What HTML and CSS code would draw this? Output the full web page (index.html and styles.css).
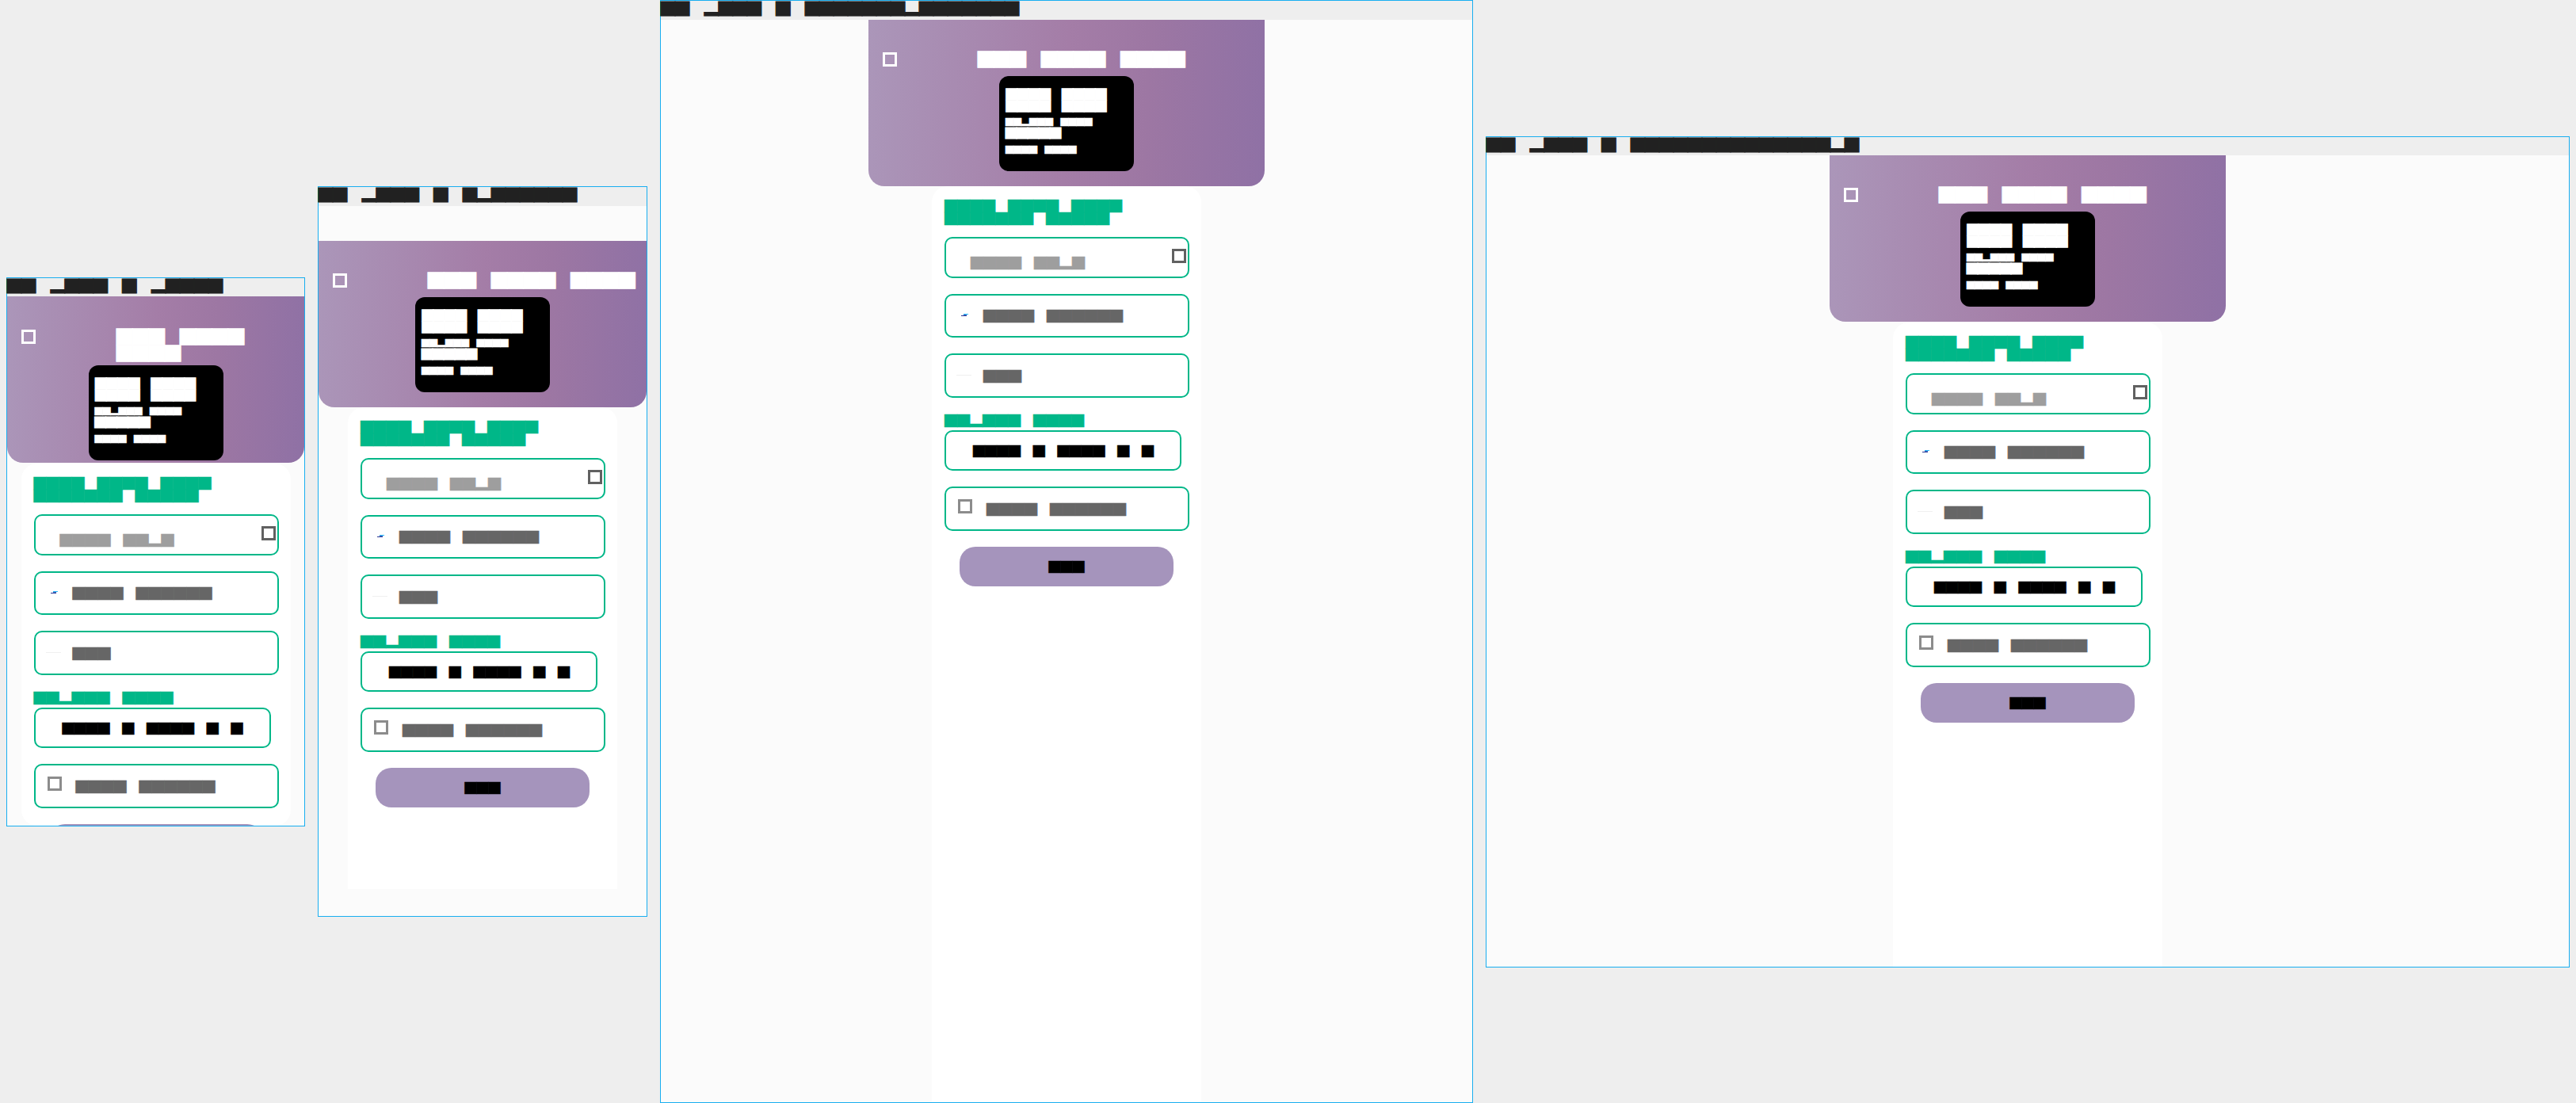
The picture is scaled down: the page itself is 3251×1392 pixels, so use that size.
FILE: index.html
```html
<!DOCTYPE html>
<html lang="en">
<head>
    <meta charset="UTF-8">
    <title>Responsive preview</title>
    <link rel="stylesheet" href="styles.css">
</head>
<body>
    <div class="stage">

        <!-- 375 -->
        <div class="frame frame-xs">
            <div class="frame-bar">██ ▂███ █ ▂████</div>
            <div class="frame-body">
                <div class="hero">
                    <div class="hero-nav">
                        <span class="box-icon hero-icon"></span>
                        <div class="hero-title">███ ████ ████</div>
                    </div>
                    <div class="ticket">
                        <div class="ticket-big">████ ████ ████ ████</div>
                        <div class="ticket-small">██▂███ ████</div>
                        <div class="ticket-mid">█████</div>
                        <div class="ticket-small ticket-last">████ ████</div>
                    </div>
                </div>
                <div class="form-card">
                    <div class="form-title">████ ████ ████ ███████ █████</div>
                    <div class="field field-first">
                        <span class="placeholder">████ ██▂█</span>
                        <span class="box-icon field-corner"></span>
                    </div>
                    <div class="field">
                        <svg class="flag-icon" width="9" height="4" viewBox="0 0 9 4"><rect x="3" width="6" height="1" fill="#29b6f6"/><rect y="2" width="7" height="1" fill="#283593"/><rect x="3" y="1" width="4" height="1" fill="#3f6fc4"/></svg>
                        <span class="field-text">████ ██████</span>
                    </div>
                    <div class="field">
                        <span class="rule-icon"></span>
                        <span class="field-text">███</span>
                    </div>
                    <div class="form-label">██▂███ ████</div>
                    <div class="field field-date">
                        <span class="date-text">████ █ ████ █ █</span>
                    </div>
                    <div class="field field-check">
                        <span class="box-icon check-icon"></span>
                        <span class="field-text">████ ██████</span>
                    </div>
                    <button class="submit-btn">███</button>
                </div>
            </div>
        </div>

        <!-- 414 -->
        <div class="frame frame-sm">
            <div class="frame-bar">██ ▂███ █ █▂██████</div>
            <div class="frame-body">
                <div class="hero">
                    <div class="hero-nav">
                        <span class="box-icon hero-icon"></span>
                        <div class="hero-title">███ ████ ████</div>
                    </div>
                    <div class="ticket">
                        <div class="ticket-big">████ ████ ████ ████</div>
                        <div class="ticket-small">██▂███ ████</div>
                        <div class="ticket-mid">█████</div>
                        <div class="ticket-small ticket-last">████ ████</div>
                    </div>
                </div>
                <div class="form-card">
                    <div class="form-title">████ ████ ████ ███████ █████</div>
                    <div class="field field-first">
                        <span class="placeholder">████ ██▂█</span>
                        <span class="box-icon field-corner"></span>
                    </div>
                    <div class="field">
                        <svg class="flag-icon" width="9" height="4" viewBox="0 0 9 4"><rect x="3" width="6" height="1" fill="#29b6f6"/><rect y="2" width="7" height="1" fill="#283593"/><rect x="3" y="1" width="4" height="1" fill="#3f6fc4"/></svg>
                        <span class="field-text">████ ██████</span>
                    </div>
                    <div class="field">
                        <span class="rule-icon"></span>
                        <span class="field-text">███</span>
                    </div>
                    <div class="form-label">██▂███ ████</div>
                    <div class="field field-date">
                        <span class="date-text">████ █ ████ █ █</span>
                    </div>
                    <div class="field field-check">
                        <span class="box-icon check-icon"></span>
                        <span class="field-text">████ ██████</span>
                    </div>
                    <button class="submit-btn">███</button>
                </div>
            </div>
        </div>

        <!-- 1024 -->
        <div class="frame frame-md">
            <div class="frame-bar">██ ▂███ █ ███████▂███████</div>
            <div class="frame-body">
                <div class="hero">
                    <div class="hero-nav">
                        <span class="box-icon hero-icon"></span>
                        <div class="hero-title">███ ████ ████</div>
                    </div>
                    <div class="ticket">
                        <div class="ticket-big">████ ████ ████ ████</div>
                        <div class="ticket-small">██▂███ ████</div>
                        <div class="ticket-mid">█████</div>
                        <div class="ticket-small ticket-last">████ ████</div>
                    </div>
                </div>
                <div class="form-card">
                    <div class="form-title">████ ████ ████ ███████ █████</div>
                    <div class="field field-first">
                        <span class="placeholder">████ ██▂█</span>
                        <span class="box-icon field-corner"></span>
                    </div>
                    <div class="field">
                        <svg class="flag-icon" width="9" height="4" viewBox="0 0 9 4"><rect x="3" width="6" height="1" fill="#29b6f6"/><rect y="2" width="7" height="1" fill="#283593"/><rect x="3" y="1" width="4" height="1" fill="#3f6fc4"/></svg>
                        <span class="field-text">████ ██████</span>
                    </div>
                    <div class="field">
                        <span class="rule-icon"></span>
                        <span class="field-text">███</span>
                    </div>
                    <div class="form-label">██▂███ ████</div>
                    <div class="field field-date">
                        <span class="date-text">████ █ ████ █ █</span>
                    </div>
                    <div class="field field-check">
                        <span class="box-icon check-icon"></span>
                        <span class="field-text">████ ██████</span>
                    </div>
                    <button class="submit-btn">███</button>
                </div>
            </div>
        </div>

        <!-- 1366 -->
        <div class="frame frame-lg">
            <div class="frame-bar">██ ▂███ █ ██████████████▂█</div>
            <div class="frame-body">
                <div class="hero">
                    <div class="hero-nav">
                        <span class="box-icon hero-icon"></span>
                        <div class="hero-title">███ ████ ████</div>
                    </div>
                    <div class="ticket">
                        <div class="ticket-big">████ ████ ████ ████</div>
                        <div class="ticket-small">██▂███ ████</div>
                        <div class="ticket-mid">█████</div>
                        <div class="ticket-small ticket-last">████ ████</div>
                    </div>
                </div>
                <div class="form-card">
                    <div class="form-title">████ ████ ████ ███████ █████</div>
                    <div class="field field-first">
                        <span class="placeholder">████ ██▂█</span>
                        <span class="box-icon field-corner"></span>
                    </div>
                    <div class="field">
                        <svg class="flag-icon" width="9" height="4" viewBox="0 0 9 4"><rect x="3" width="6" height="1" fill="#29b6f6"/><rect y="2" width="7" height="1" fill="#283593"/><rect x="3" y="1" width="4" height="1" fill="#3f6fc4"/></svg>
                        <span class="field-text">████ ██████</span>
                    </div>
                    <div class="field">
                        <span class="rule-icon"></span>
                        <span class="field-text">███</span>
                    </div>
                    <div class="form-label">██▂███ ████</div>
                    <div class="field field-date">
                        <span class="date-text">████ █ ████ █ █</span>
                    </div>
                    <div class="field field-check">
                        <span class="box-icon check-icon"></span>
                        <span class="field-text">████ ██████</span>
                    </div>
                    <button class="submit-btn">███</button>
                </div>
            </div>
        </div>

    </div>
</body>
</html>
```
FILE: styles.css
```css
* { box-sizing: border-box; margin: 0; padding: 0; }
html, body {
    height: 100%;
    overflow: hidden;
}
body {
    background-color: #eeeeee;
    font-family: "Noto Sans CJK SC", "Noto Sans", sans-serif;
    line-height: 1;
    word-spacing: .776em;
    -webkit-text-stroke: .6px;
}
.stage {
    display: flex;
    align-items: flex-start;
    gap: 16px;
    padding-left: 8px;
}

/* device frames */
.frame {
    flex: none;
    display: flex;
    flex-direction: column;
    border: 1px solid #18aef0;
}
.frame-xs { width: 377px; height: 693px; margin-top: 350px; }
.frame-sm { width: 416px; height: 922px; margin-top: 235px; }
.frame-md { width: 1026px; height: 1392px; }
.frame-lg { width: 1368px; height: 1049px; margin-top: 172px; }

.frame-bar {
    flex: none;
    height: 24px;
    background-color: #eeeeee;
    color: #212121;
    font-size: 18px;
    white-space: nowrap;
    word-spacing: 14.6px;
    -webkit-text-stroke: 1.2px;
}
.frame-xs .frame-bar, .frame-lg .frame-bar { height: 23px; }
.frame-body {
    flex: 1;
    min-height: 0;
    background-color: #fbfbfb;
    display: flex;
    flex-direction: column;
    align-items: center;
}
.frame-sm .frame-body { padding-top: 44px; padding-bottom: 34px; }

/* hero */
.hero {
    flex: none;
    width: 100%;
    max-width: 500px;
    height: 210px;
    padding-top: 39px;
    display: flex;
    flex-direction: column;
    background: linear-gradient(92deg, #ab96b9 0%, #a47da7 50%, #9d77a3 70%, #8f71a5 100%);
    border-radius: 0 0 20px 20px;
}
.frame-xs .hero { padding-top: 40px; }
.hero-nav {
    display: flex;
    align-items: flex-start;
    padding-left: 18px;
    min-height: 26px;
    margin-bottom: 6px;
}
.box-icon {
    display: block;
    flex: none;
    width: 18px;
    height: 18px;
    border: 3px solid #ffffff;
}
.hero-icon { margin-top: 2px; }
.hero-title {
    margin-left: 102px;
    color: #ffffff;
    font-size: 20.3px;
    line-height: 20.5px;
    word-spacing: .72em;
    -webkit-text-stroke: 1.2px;
}
.ticket {
    align-self: center;
    flex: none;
    width: 170px;
    height: 120px;
    padding: 15px 8px 0;
    background-color: #000000;
    border-radius: 12px;
    color: #ffffff;
}
.ticket-big {
    padding-left: .7px;
    font-size: 14px;
    line-height: 14.5px;
    word-spacing: 11.5px;
    -webkit-text-stroke: 1.4px;
    margin-bottom: 8px;
}
.ticket-small { font-size: 10px; line-height: 11px; word-spacing: .72em; }
.ticket-mid {
    font-size: 14px;
    line-height: 15px;
    margin-top: 1px;
    -webkit-text-stroke: 1.2px;
}
.ticket-last { margin-top: 8px; }

/* form */
.form-card {
    flex: 1 1 auto;
    width: 340px;
    padding: 16px 16px 0;
    background-color: #ffffff;
    border-radius: 20px 20px 0 0;
}
.frame-lg .form-card { margin-top: 1px; }
.frame-xs .form-card {
    margin-top: 1px;
    min-height: 0;
    overflow: hidden;
    border-radius: 20px;
}
.form-title {
    color: #00b788;
    font-size: 16px;
    line-height: 16px;
    margin-bottom: 16px;
}
.field {
    position: relative;
    display: flex;
    align-items: center;
    width: 309px;
    height: 55.5px;
    margin-bottom: 20px;
    padding-left: 19px;
    background-color: #ffffff;
    border: 2px solid #00b788;
    border-radius: 10px;
}
.field-first {
    height: 51.5px;
    padding-left: 31px;
    padding-top: 12px;
}
.placeholder { color: #9e9e9e; font-size: 16px; }
.field-corner {
    position: absolute;
    top: 12.5px;
    right: 2px;
    border-color: #616161;
}
.flag-icon { flex: none; margin-right: 19px; }
.rule-icon {
    flex: none;
    width: 19px;
    height: 1px;
    margin-left: -6px;
    margin-right: 15px;
    background-color: #f0f0f0;
}
.field-text { color: #666666; font-size: 16px; }
.form-label {
    color: #00b788;
    font-size: 16px;
    line-height: 16px;
    margin-bottom: 5px;
}
.field-date {
    width: 299px;
    height: 51.5px;
    padding-left: 34px;
}
.date-text { color: #000000; font-size: 15px; }
.field-check { padding-left: 15px; }
.check-icon {
    margin-top: -6px;
    margin-right: 18px;
    border-color: #8c8c8c;
}
.submit-btn {
    display: block;
    width: 270px;
    height: 50px;
    margin: 0 auto;
    background-color: #a594bc;
    border: none;
    border-radius: 20px;
    color: #000000;
    font-family: inherit;
    font-size: 15px;
}
```
